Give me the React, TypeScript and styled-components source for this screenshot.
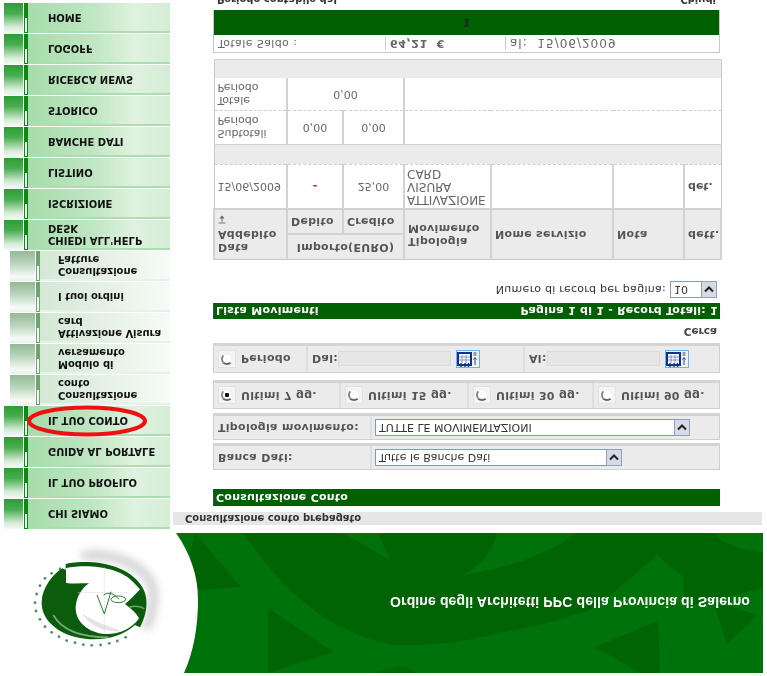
import React from "react";
import styled, { createGlobalStyle } from "styled-components";

const Global = createGlobalStyle`
  html, body { margin: 0; padding: 0; background: #fff; overflow: hidden; }
`;

const font = `"DejaVu Sans", Verdana, sans-serif`;

const Page = styled.div`
  width: 767px;
  height: 676px;
  overflow: hidden;
  padding-top: 3px;
  box-sizing: border-box;
  transform: scaleY(-1);
  font-family: ${font};
  background: #fff;
`;

const Banner = styled.header`
  position: relative;
  width: 763px;
  height: 140px;
  display: flex;
  align-items: center;
  justify-content: flex-end;
  background: #fff;
`;

const BannerArt = styled.svg`
  position: absolute;
  inset: 0;
`;

const BannerTitle = styled.h1`
  position: relative;
  margin: 0 13px 0 0;
  font: bold 14px "Liberation Sans", Arial, sans-serif;
  letter-spacing: 0.12px;
  color: #fff;
  transform: translateY(1px);
`;

const Body = styled.div`
  display: flex;
  align-items: flex-start;
`;

const Sidebar = styled.nav`
  width: 166px;
  margin: 4px 0 0 4px;
  display: flex;
  flex-direction: column;
  gap: 1px;
`;

const Item = styled.div<{ $sub?: boolean }>`
  position: relative;
  height: 30px;
  display: flex;
  margin-left: ${(p) => (p.$sub ? "6px" : "0")};
`;

const Swatch = styled.span<{ $sub?: boolean }>`
  flex: none;
  width: ${(p) => (p.$sub ? "25px" : "19px")};
  background: ${(p) =>
    p.$sub
      ? "linear-gradient(to top, #95b996 0%, #b9d3ba 40%, #f6faf6 85%, #e9f0e9 100%)"
      : "linear-gradient(to top, #2d9d34 0%, #49ad50 35%, #d6edd7 80%, #f2f9f2 100%)"};
`;

const Bar = styled.span<{ $sub?: boolean }>`
  flex: none;
  width: 2px;
  margin-left: 1px;
  border: 1px solid ${(p) => (p.$sub ? "#6aa66e" : "#0a8a12")};
  background: linear-gradient(
    to top,
    ${(p) => (p.$sub ? "#6aa66e" : "#0a8a12")} 50%,
    #f4faf4 50%
  );
`;

const Label = styled.div<{ $sub?: boolean }>`
  flex: 1;
  display: flex;
  align-items: center;
  box-sizing: border-box;
  padding-left: ${(p) => (p.$sub ? "18px" : "20px")};
  border-top: 2px solid ${(p) => (p.$sub ? "#e6f2e6" : "#a9dfae")};
  font-size: 10px;
  font-weight: bold;
  line-height: 12px;
  color: #111;
  background: ${(p) =>
    p.$sub
      ? "linear-gradient(to right, #d4e8d5 0%, #e3f0e3 45%, #f7fbf7 100%)"
      : "linear-gradient(to right, #a6dcab 0%, #bfe6c2 45%, #dff2df 75%, #d4edd6 100%)"};
`;

const LabelText = styled.span<{ $sub?: boolean }>`
  display: block;
  max-width: ${(p) => (p.$sub ? "106px" : "118px")};
`;

const Ring = styled.svg`
  position: absolute;
  left: 22px;
  top: -2px;
`;

const Main = styled.main`
  width: 589px;
  margin: 8px 0 0 3px;
`;

const Crumb = styled.div`
  height: 13px;
  padding-left: 12px;
  background: #e6e6e6;
  font-size: 10px;
  font-weight: bold;
  line-height: 13px;
  color: #333;
`;

const Content = styled.section`
  width: 507px;
  margin-left: 40px;
  display: flex;
  flex-direction: column;
`;

const GreenBar = styled.div<{ $top: number; $h: number }>`
  margin-top: ${(p) => p.$top}px;
  height: ${(p) => p.$h}px;
  display: flex;
  align-items: center;
  justify-content: space-between;
  padding: 0 2px;
  background: #005f00;
  border-left: 1px solid #1b5a70;
  box-sizing: border-box;
  color: #fff;
  font-size: 11px;
  letter-spacing: 0.25px;
  font-weight: bold;
`;

const FilterRow = styled.div<{ $top: number; $h: number }>`
  margin-top: ${(p) => p.$top}px;
  height: ${(p) => p.$h}px;
  display: flex;
  background: #ebebeb;
  border: 1px solid #cfcfcf;
  border-bottom: 3px solid #d4d4d4;
  box-sizing: border-box;
`;

const FilterCell = styled.div<{ $w?: number; $gap?: number }>`
  display: flex;
  align-items: center;
  gap: ${(p) => p.$gap ?? 5}px;
  box-sizing: border-box;
  padding-left: 4px;
  flex: ${(p) => (p.$w ? `0 0 ${p.$w}px` : "1")};
  border-right: 2px solid #dedede;
  font-size: 11px;
  letter-spacing: 0.3px;
  font-weight: bold;
  color: #555;
  &:last-child { border-right: 0; }
`;

const SelectBox = styled.div<{ $w: number }>`
  flex: none;
  display: flex;
  width: ${(p) => p.$w}px;
  height: 17px;
  margin-left: -1px;
  box-sizing: border-box;
  border: 1px solid #7f9db9;
  background: #fff;
  font-size: 11px;
  letter-spacing: 0;
  font-weight: normal;
  line-height: 15px;
  color: #333;
`;

const SelectText = styled.span`
  flex: 1;
  padding-left: 3px;
  white-space: nowrap;
`;

const SelectBtn = styled.span`
  flex: none;
  width: 16px;
  display: flex;
  align-items: center;
  justify-content: center;
  box-sizing: border-box;
  background: #d6d9e6;
  border: 1px solid #8f9fbd;
  margin: -1px -1px -1px 0;
`;

const RadioBox = styled.span`
  flex: none;
  width: 18px;
  height: 18px;
  display: flex;
  align-items: center;
  justify-content: center;
  background: #f4f4f4;
  border: 1px solid #e2e2e2;
  box-sizing: border-box;
`;

const RadioDot = styled.span<{ $on?: boolean }>`
  width: 12px;
  height: 12px;
  border-radius: 50%;
  box-sizing: border-box;
  border: 2px solid #f4f4f4;
  border-left-color: #888;
  border-top-color: #666;
  background: ${(p) =>
    p.$on ? "radial-gradient(circle, #111 0 2px, #fff 2.5px)" : "#fff"};
`;

const DateInput = styled.span`
  flex: none;
  width: 113px;
  height: 15px;
  box-sizing: border-box;
  background: #e6e6e6;
  border: 1px solid #dadada;
`;

const Cal = styled.svg`
  flex: none;
  margin-left: 5px;
`;

const SearchRow = styled.div`
  margin-top: 5px;
  height: 12px;
  padding-right: 3px;
  text-align: right;
  font-size: 10.5px;
  font-weight: bold;
  line-height: 12px;
  color: #444;
`;

const PerPage = styled.div`
  margin-top: 5px;
  height: 17px;
  display: flex;
  align-items: center;
  justify-content: flex-end;
  gap: 5px;
  padding-right: 3px;
  font-size: 11px;
  letter-spacing: 0.28px;
  color: #333;
`;

const Grid = styled.table<{ $top: number }>`
  margin-top: ${(p) => p.$top}px;
  width: 507px;
  border-collapse: collapse;
  table-layout: fixed;
  font-size: 11px;
  color: #666;
  border: 1px solid #c8c8c8;
`;

const Head = styled.th`
  padding: 0 3px;
  background: #ebebeb;
  border: 2px solid #d2d2d2;
  border-top: 1px solid #c8c8c8;
  font-size: 11px;
  letter-spacing: 0.3px;
  font-weight: bold;
  line-height: 13px;
  color: #555;
  text-align: left;
`;

const HeadCenter = styled(Head)`
  text-align: center;
`;

const Sort = styled.svg`
  display: block;
  margin-top: 4px;
`;

const Row = styled.tr<{ $h: number; $plain?: boolean }>`
  height: ${(p) => p.$h}px;
  ${(p) => (p.$plain ? "td { border-bottom: 0; }" : "")}
`;

const Cell = styled.td`
  padding: 0 3px;
  border-left: 2px solid #d2d2d2;
  border-bottom: 1px dashed #cfcfcf;
  line-height: 13px;
  &:first-child { border-left: 0; }
`;

const NumCell = styled(Cell)`
  text-align: center;
`;

const RedCell = styled(NumCell)`
  color: #e01010;
  font-weight: bold;
`;

const BoldCell = styled(Cell)`
  font-weight: bold;
  color: #555;
`;

const ServiceCell = styled(Cell)`
  padding: 0 2px;
  font-size: 12px;
`;

const Band = styled.td`
  background: #ebebeb;
  border-bottom: 1px solid #d2d2d2;
`;

const Saldo = styled.div`
  margin-top: 6px;
  display: flex;
  flex-direction: column;
  border: 1px solid #c8c8c8;
  border-bottom: 0;
`;

const SaldoRow = styled.div`
  height: 17px;
  display: flex;
  align-items: center;
  color: #666;
`;

const SaldoCell = styled.div<{ $w?: number; $bold?: boolean; $size: number; $track: number }>`
  flex: ${(p) => (p.$w ? `0 0 ${p.$w}px` : "1")};
  box-sizing: border-box;
  padding-left: 4px;
  font-size: ${(p) => p.$size}px;
  letter-spacing: ${(p) => p.$track}px;
  font-weight: ${(p) => (p.$bold ? "bold" : "normal")};
  border-left: 1px solid #ccc;
  white-space: pre;
  &:first-child { border-left: 0; }
`;

const SaldoHead = styled.div`
  height: 25px;
  display: flex;
  align-items: center;
  justify-content: center;
  background: #005f00;
  font-size: 10px;
  font-weight: bold;
  color: #222;
`;

const Foot = styled.div`
  margin-top: 4px;
  display: flex;
  justify-content: space-between;
  padding: 0 4px;
  font-size: 10px;
  font-weight: bold;
  line-height: 13px;
  color: #333;
`;

const Chevron = () => (
  <svg width="10" height="8" viewBox="0 0 10 8">
    <path d="M1 1.5 L5 5.5 L9 1.5" fill="none" stroke="#222" strokeWidth="2" />
  </svg>
);

const Calendar = () => (
  <Cal width="24" height="18" viewBox="0 0 24 18">
    <rect x="0.5" y="0.5" width="23" height="17" fill="#eaf3fc" stroke="#6fb0ee" />
    <rect x="2" y="3" width="13" height="12" fill="#fff" stroke="#12308c" strokeWidth="2" />
    <path d="M6 5v8M10 5v8M3 8h11M3 11h11" stroke="#7f90c8" />
    <path d="M5 1v4M9 1v4M12.5 1v4" stroke="#12308c" strokeWidth="1.4" />
    <path d="M19 3v7M17.500 8.500l1.500 2 1.500-2M17.500 13h3M17.500 15h3" stroke="#445" fill="none" />
  </Cal>
);

const SortIcon = () => (
  <Sort width="8" height="9" viewBox="0 0 8 9">
    <path d="M0.5 1H7.500" stroke="#777" />
    <path d="M4 2V8" stroke="#777" />
    <path d="M1.500 5.500L4 8.500L6.500 5.500Z" fill="#666" />
  </Sort>
);

const dots = [
  [180, 147], [155, 160], [135, 175], [120, 197], [110, 222], [105, 248], [108, 273],
  [120, 298], [135, 320], [155, 337], [177, 350], [200, 362], [225, 368], [250, 374],
  [275, 376], [302, 375], [328, 370], [352, 363], [377, 352],
];

const Art = () => (
  <BannerArt width="763" height="140" viewBox="0 0 763 140">
    <defs>
      <filter id="soft" x="-40%" y="-40%" width="180%" height="180%"><feGaussianBlur stdDeviation="12" /></filter>
      <filter id="soft2" x="-30%" y="-30%" width="160%" height="160%"><feGaussianBlur stdDeviation="2" /></filter>
    </defs>
    <g transform="matrix(1 0 0 -1 0 140)">
      <rect x="176" width="587" height="140" fill="#00720a" />
      <path d="M243 0C270 40 300 70 333 90C360 103 380 112 400 112C440 112 470 108 500 100C540 92 570 85 597 74L657 22L683 44L685 74L763 55V0Z" fill="#006404" />
      <path d="M343 0L390 27L378 0Z" fill="#00720a" />
      <path d="M497 0C492 20 480 33 463 42C510 35 550 20 577 0Z" fill="#00720a" />
      <path d="M713 0C725 12 745 18 763 19V0Z" fill="#00720a" />
      <path d="M195 0L241 54L197 57L190 20Z" fill="#006404" />
      <path d="M268 75L333 119L268 140Z" fill="#006404" />
      <path d="M595 114L658 88L660 140L640 140Z" fill="#006404" />
      <path d="M713 68L757 82L727 111Z" fill="#006404" />
      <path d="M371 140L400 133L420 140Z" fill="#006906" />
      <path d="M176 0H0V140H184C194 118 198 92 198 67C198 42 190 20 176 0Z" fill="#fff" />
      <g fill="#4f8f5f">
        {dots.map(([x, y]) => (
          <circle key={`${x}-${y}`} cx={x / 3} cy={y / 3 - 13} r="1.400" />
        ))}
      </g>
      <g transform="translate(25 17) scale(0.3333)">
        <path d="M170 18C270 5 380 50 385 130C387 170 375 215 360 235" fill="none" stroke="#cfcfcf" strokeWidth="26" filter="url(#soft)" />
        <path d="M122 42C190 28 290 38 340 95C372 130 372 180 345 232L330 225C290 262 230 272 180 266C100 256 48 210 50 155C52 115 80 75 112 55L122 60Z" fill="#0b5c0c" />
        <path d="M123 54C190 42 285 50 328 100L345 118C330 135 315 150 300 162C320 178 335 190 342 205C320 238 280 254 240 252C190 248 150 215 152 170C155 140 170 115 192 100C165 100 140 102 123 98Z" fill="#fff" />
        <path d="M172 190C190 225 235 248 290 244C250 228 205 215 172 190Z" fill="#e4e4e4" />
        <path d="M312 172C325 168 345 168 358 176" stroke="#6aa56a" strokeWidth="5" fill="none" filter="url(#soft2)" />
        <path d="M85 195C110 240 170 262 250 262" stroke="#7fa57f" strokeWidth="5" fill="none" filter="url(#soft2)" />
        <path d="M238 52V250M158 128H310" stroke="#d4d4d4" strokeWidth="1.500" fill="none" />
        <path d="M216 135L238 192L258 125" stroke="#2c7a34" strokeWidth="3" fill="none" />
        <ellipse cx="280" cy="148" rx="22" ry="10" stroke="#2c7a34" strokeWidth="3" fill="none" />
        <path d="M236 135C250 125 268 130 282 148" stroke="#2c7a34" strokeWidth="3" fill="none" />
      </g>
    </g>
  </BannerArt>
);

type Entry = { text: string; sub?: boolean; ring?: boolean };
const menu: Entry[] = [
  { text: "CHI SIAMO" },
  { text: "IL TUO PROFILO" },
  { text: "GUIDA AL PORTALE" },
  { text: "IL TUO CONTO", ring: true },
  { text: "Consultazione conto", sub: true },
  { text: "Modulo di versamento", sub: true },
  { text: "Attivazione Visura card", sub: true },
  { text: "I tuoi ordini", sub: true },
  { text: "Consultazione Fatture", sub: true },
  { text: "CHIEDI ALL'HELP DESK" },
  { text: "ISCRIZIONE" },
  { text: "LISTINO" },
  { text: "BANCHE DATI" },
  { text: "STORICO" },
  { text: "RICERCA NEWS" },
  { text: "LOGOFF" },
  { text: "HOME" },
];

export default function App() {
  return (
    <Page>
      <Global />
      <Banner>
        <Art />
        <BannerTitle>Ordine degli Architetti PPC della Provincia di Salerno</BannerTitle>
      </Banner>
      <Body>
        <Sidebar>
          {menu.map((m) => (
            <Item key={m.text} $sub={m.sub}>
              <Swatch $sub={m.sub} />
              <Bar $sub={m.sub} />
              <Label $sub={m.sub}>
                <LabelText $sub={m.sub}>{m.text}</LabelText>
              </Label>
              {m.ring && (
                <Ring width="122" height="34" viewBox="0 0 122 34">
                  <ellipse cx="61" cy="17" rx="58" ry="13.500" fill="none" stroke="#ee1111" strokeWidth="4" />
                </Ring>
              )}
            </Item>
          ))}
        </Sidebar>
        <Main>
          <Crumb>Consultazione conto prepagato</Crumb>
          <Content>
            <GreenBar $top={6} $h={17}>
              <span>Consultazione Conto</span>
            </GreenBar>
            <FilterRow $top={19} $h={27}>
              <FilterCell $w={158}>Banca Dati:</FilterCell>
              <FilterCell>
                <SelectBox $w={247}>
                  <SelectText>Tutte le Banche Dati</SelectText>
                  <SelectBtn><Chevron /></SelectBtn>
                </SelectBox>
              </FilterCell>
            </FilterRow>
            <FilterRow $top={3} $h={27}>
              <FilterCell $w={158}>Tipologia movimento:</FilterCell>
              <FilterCell>
                <SelectBox $w={315}>
                  <SelectText>TUTTE LE MOVIMENTAZIONI</SelectText>
                  <SelectBtn><Chevron /></SelectBtn>
                </SelectBox>
              </FilterCell>
            </FilterRow>
            <FilterRow $top={4} $h={29}>
              <FilterCell $w={127}>
                <RadioBox><RadioDot $on /></RadioBox>Ultimi 7 gg.
              </FilterCell>
              <FilterCell $w={128}>
                <RadioBox><RadioDot /></RadioBox>Ultimi 15 gg.
              </FilterCell>
              <FilterCell $w={125}>
                <RadioBox><RadioDot /></RadioBox>Ultimi 30 gg.
              </FilterCell>
              <FilterCell>
                <RadioBox><RadioDot /></RadioBox>Ultimi 90 gg.
              </FilterCell>
            </FilterRow>
            <FilterRow $top={7} $h={30}>
              <FilterCell $w={94}>
                <RadioBox><RadioDot /></RadioBox>Periodo
              </FilterCell>
              <FilterCell $w={217} $gap={0}>
                Dal:<DateInput /><Calendar />
              </FilterCell>
              <FilterCell $gap={0}>
                Al:<DateInput /><Calendar />
              </FilterCell>
            </FilterRow>
            <SearchRow>Cerca</SearchRow>
            <GreenBar $top={7} $h={16}>
              <span>Lista Movimenti</span>
              <span>Pagina 1 di 1 - Record Totali: 1</span>
            </GreenBar>
            <PerPage>
              Numero di record per pagina:
              <SelectBox $w={47}>
                <SelectText>10</SelectText>
                <SelectBtn><Chevron /></SelectBtn>
              </SelectBox>
            </PerPage>
            <Grid $top={21}>
              <colgroup>
                <col width="73" />
                <col width="56" />
                <col width="61" />
                <col width="87" />
                <col width="122" />
                <col width="71" />
                <col width="37" />
              </colgroup>
              <tbody>
                <Row $h={25}>
                  <Head rowSpan={2}>Data Addebito<SortIcon /></Head>
                  <HeadCenter colSpan={2}>Importo(EURO)</HeadCenter>
                  <Head rowSpan={2}>Tipologia Movimento</Head>
                  <Head rowSpan={2}>Nome servizio</Head>
                  <Head rowSpan={2}>Nota</Head>
                  <Head rowSpan={2}>dett.</Head>
                </Row>
                <Row $h={25}>
                  <Head>Debito</Head>
                  <Head>Credito</Head>
                </Row>
                <Row $h={45}>
                  <Cell>15/06/2009</Cell>
                  <RedCell>-</RedCell>
                  <NumCell>25,00</NumCell>
                  <ServiceCell>ATTIVAZIONE<br />VISURA<br />CARD</ServiceCell>
                  <Cell />
                  <Cell />
                  <BoldCell>det.</BoldCell>
                </Row>
                <Row $h={20}>
                  <Band colSpan={7} />
                </Row>
                <Row $h={34}>
                  <Cell>Subtotali Periodo</Cell>
                  <NumCell>0,00</NumCell>
                  <NumCell>0,00</NumCell>
                  <Cell colSpan={4} />
                </Row>
                <Row $h={32} $plain>
                  <Cell>Totale Periodo</Cell>
                  <NumCell colSpan={2}>0,00</NumCell>
                  <Cell colSpan={4} />
                </Row>
                <Row $h={19}>
                  <Band colSpan={7} />
                </Row>
              </tbody>
            </Grid>
            <Saldo>
              <SaldoRow>
                <SaldoCell $w={171} $size={11} $track={0.4}>Totale Saldo :</SaldoCell>
                <SaldoCell $w={120} $bold $size={11} $track={0.6}>64,21  €</SaldoCell>
                <SaldoCell $size={12} $track={1}>al:  15/06/2009</SaldoCell>
              </SaldoRow>
              <SaldoHead>1</SaldoHead>
            </Saldo>
            <Foot>
              <span>Periodo contabile dal</span>
              <span>Chiudi</span>
            </Foot>
          </Content>
        </Main>
      </Body>
    </Page>
  );
}
